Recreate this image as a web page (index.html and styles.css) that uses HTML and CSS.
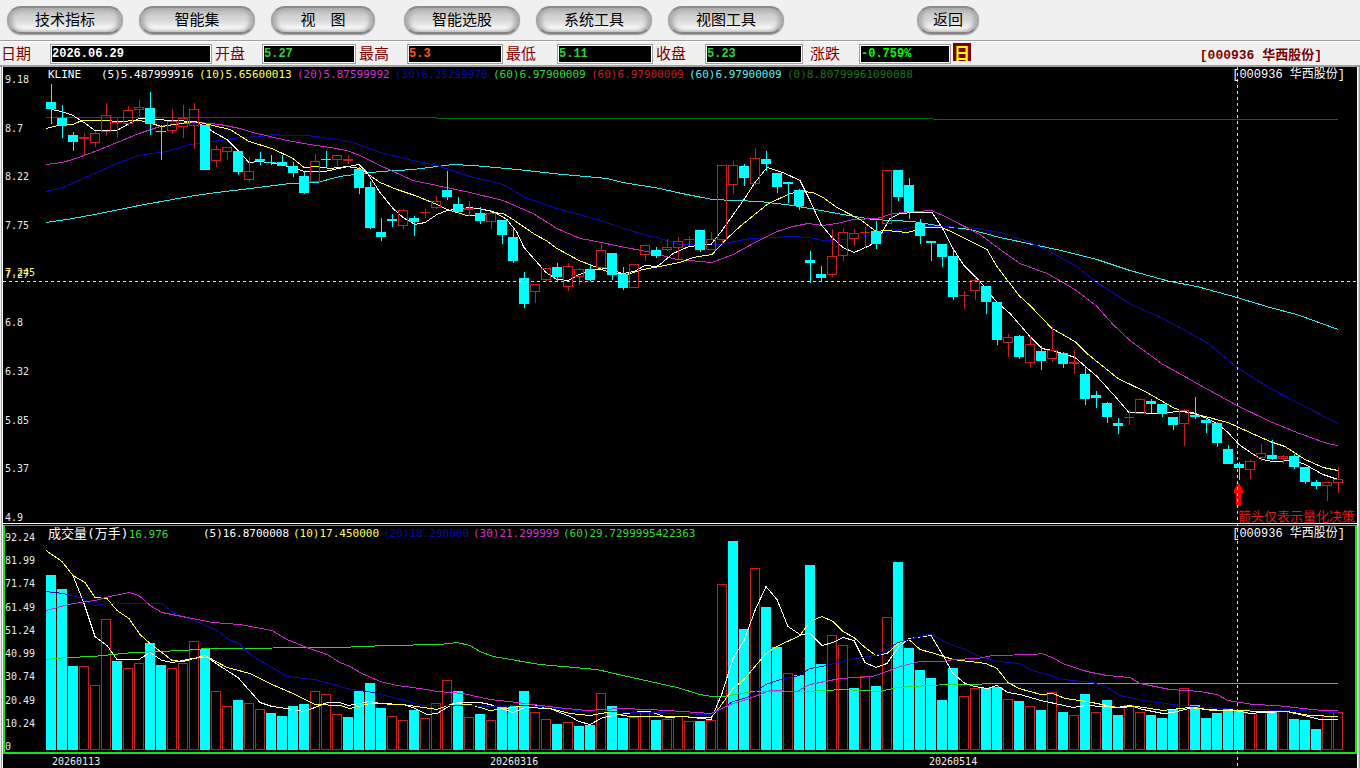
FILE: index.html
```
<!DOCTYPE html>
<html lang="zh-CN">
<head>
<meta charset="utf-8">
<title>[000936 华西股份]</title>
<link rel="stylesheet" href="styles.css">
</head>
<body>
<nav class="toolbar">
  <button class="pill" type="button">技术指标</button>
  <button class="pill" type="button">智能集</button>
  <button class="pill pill-view" type="button">视&#12288;图</button>
  <button class="pill" type="button">智能选股</button>
  <button class="pill" type="button">系统工具</button>
  <button class="pill" type="button">视图工具</button>
  <button class="pill pill-back" type="button">返回</button>
</nav>
<form class="quote">
  <label class="first" for="date">日期</label><input id="date" class="white" value="2026.06.29" readonly>
  <label for="open">开盘</label><input id="open" value="5.27" readonly>
  <label for="high">最高</label><input id="high" class="up" value="5.3" readonly>
  <label for="low">最低</label><input id="low" value="5.11" readonly>
  <label for="close">收盘</label><input id="close" value="5.23" readonly>
  <label class="wide" for="change">涨跌</label><input id="change" class="bright" value="-0.759%" readonly>
  <button class="period" type="button">日</button>
  <strong class="stock">[000936 华西股份]</strong>
</form>
<main class="chart">
  <section class="pane price">
    <svg id="price-plot" viewBox="3 67 1354 456" role="img" aria-label="KLINE"></svg>
    <div class="axis">
      <span>9.18</span><span>8.7</span><span>8.22</span><span>7.75</span><span class="under">7.27<b class="cursor-value">7.245</b></span><span>6.8</span><span>6.32</span><span>5.85</span><span>5.37</span><span>4.9</span>
    </div>
    <div class="legend">
      <span class="name">KLINE</span>
      <span>(5)5.487999916</span><span class="yellow">(10)5.65600013</span><span class="magenta">(20)5.87599992</span><span class="blue">(30)6.25299978</span><span class="green">(60)6.97900009</span><span class="red">(60)6.97900009</span><span class="cyan">(60)6.97900009</span><span class="dark">(0)8.80799961090088</span>
      <span class="code">[000936 华西股份]</span>
    </div>
  </section>
  <section class="pane volume">
    <svg id="volume-plot" viewBox="5 526 1350 226" role="img" aria-label="成交量"></svg>
    <div class="axis">
      <span>92.24</span><span>81.99</span><span>71.74</span><span>61.49</span><span>51.24</span><span>40.99</span><span>30.74</span><span>20.49</span><span>10.24</span><span>0</span>
    </div>
    <div class="legend">
      <span class="name"><span class="caption">成交量(万手)</span><span class="green">16.976</span></span>
      <span>(5)16.8700008</span><span class="yellow">(10)17.450000</span><span class="blue">(20)18.290000</span><span class="magenta">(30)21.299999</span><span class="green">(60)29.7299995422363</span>
      <span class="code">[000936 华西股份]</span>
    </div>
  </section>
  <footer class="dates"><span>20260113</span><span>20260316</span><span>20260514</span></footer>
  <div class="crosshair"></div>
</main>
<script src="chart.js"></script>
</body>
</html>
```
FILE: styles.css
```
* { box-sizing: border-box; }
body {
  margin: 0;
  background: #f0f0f0;
  font-family: "Liberation Sans", "Noto Sans CJK SC", sans-serif;
}
.toolbar {
  display: flex;
  align-items: flex-start;
  gap: 16px;
  height: 41px;
  padding: 6px 7px;
  border-bottom: 1px solid #a0a0a0;
}
.pill {
  width: 116px;
  height: 28px;
  padding: 0 0 2px;
  border: 2px solid #a4a4a4;
  border-top-color: #8c8c8c;
  border-bottom-color: #848484;
  border-radius: 14px;
  background: linear-gradient(#b4b4b4, #d2d2d2 35%, #d6d6d6 50%, #f4f4f4 80%, #fff);
  box-shadow: inset 3px 0 4px #aaa, inset -3px 0 4px #aaa, 0 1px 1px #999;
  color: #000;
  font: 15px/20px "Noto Sans CJK SC", sans-serif;
  white-space: nowrap;
}
.pill-view { width: 104px; margin-right: 13px; }
.pill-back { width: 62px; margin-left: 117px; }
.quote {
  display: grid;
  grid-template-columns: 50px 162px 50px 94px 51px 96px 54px 96px 52px 98px 56px 92px 20px 1fr;
  align-items: center;
  height: 26px;
  border-top: 1px solid #fff;
  border-bottom: 2px solid #a0a0a0;
}
.quote label {
  padding: 0 0 2px 3px;
  color: #800000;
  font: 15px/20px "Noto Sans CJK SC", sans-serif;
}
.quote .first { padding-left: 1px; }
.quote .wide { padding-left: 7px; }
.quote input {
  width: 100%;
  height: 20px;
  padding: 0;
  border: 1px solid #a0a0a0;
  outline: 1px solid #fff;
  outline-offset: -2px;
  background: #000;
  color: #32d232;
  font: bold 12px/16px "Liberation Mono", monospace;
  text-indent: 1px;
}
.quote .white { color: #fff; }
.quote .up { color: #ff5a1e; }
.quote .bright { color: #0f0; }
.period {
  width: 18px;
  height: 18px;
  margin: 0 0 3px 2px;
  padding: 0;
  border: 0;
  background: #800000;
  color: #ff0;
  font: bold 16px/17px "Noto Sans CJK SC", sans-serif;
}
.stock {
  justify-self: end;
  padding: 4px 38px 0 0;
  color: #800000;
  font: bold 13px/18px "Liberation Mono", "Noto Sans CJK SC", monospace;
}
.chart {
  position: relative;
  padding: 0 3px 1px;
  overflow: hidden;
  background: linear-gradient(90deg, #f0f0f0 1px, #a0a0a0 1px 2px, #fff 2px 50%, #fff calc(100% - 2px), #a0a0a0 calc(100% - 1px));
}
.pane { display: grid; background: #000; }
.pane > * { grid-area: 1 / 1; }
.pane svg { display: block; width: 100%; height: auto; overflow: visible; }
.price { border-bottom: 1px solid #fff; }
.volume {
  border: 2px solid #14e614;
  border-top: 1px solid #32c832;
  box-shadow: 0 -1px 0 #000;
  margin-top: 1px;
}
.axis {
  display: flex;
  flex-direction: column;
  justify-content: space-between;
  width: 40px;
  padding: 8px 0 0 2px;
  color: #e8e8e8;
  font: 10px/10px "DejaVu Sans Mono", monospace;
}
.volume .axis { padding: 7px 0 0; }
.under { position: relative; }
.cursor-value {
  position: absolute;
  left: 0;
  bottom: 2px;
  color: #ff5;
  font-weight: normal;
}
.legend {
  display: grid;
  grid-template-columns: 53px repeat(7, 98px) 1fr auto;
  align-self: start;
  padding: 0 12px 0 45px;
  color: #fff;
  font: 11px/16px "DejaVu Sans Mono", "Noto Sans CJK SC", monospace;
  white-space: nowrap;
}
.volume .legend {
  grid-template-columns: 155px repeat(4, 90px) 1fr auto;
  padding: 0 10px 0 43px;
}
.code { font: 12px/16px "Liberation Mono", "Noto Sans CJK SC", monospace; }
.caption { font-size: 13px; }
.yellow { color: #ffff50; }
.magenta { color: #d232d2; }
.blue { color: #0a0aaa; }
.green { color: #32dc32; }
.red { color: #c81e1e; }
.cyan { color: #50f0f0; }
.dark { color: #147814; }
.dates {
  display: grid;
  grid-template-columns: 438fr 439fr 428fr;
  padding: 2px 0 0 49px;
  background: #000;
  color: #f0f0f0;
  font: 10px/12px "DejaVu Sans Mono", monospace;
}
.chart::after {
  content: "";
  position: absolute;
  right: 0;
  bottom: 0;
  left: 0;
  height: 1px;
  background: #a0a0a0;
}
.crosshair {
  position: absolute;
  top: 0;
  bottom: 1px;
  left: 90.95%;
  width: 1px;
  background: repeating-linear-gradient(#d8d8d8 0 3px, transparent 3px 6px);
}
.line { fill: none; stroke-width: 1; }
.plot-note { fill: #dc1e1e; font: 13px "Noto Sans CJK SC", sans-serif; }
```
FILE: chart.js
```
const STEP = 11;
const LEFT = 46;
const CYAN = "#00ffff";
const RED = "#c81e1e";

// High, body top, body bottom, low; the last field is the direction.
const candles = `84 102 109 124 d;105 118 126 138 d;132 135 142 151 d;133 137 139 155 u;131 133 143 147 u;103 115 132 136 u;118 122 123 138 u;106 110 124 126 u;100 107 110 116 u;92 108 124 135 d;125 131 132 160 d;109 121 131 134 u;105 118 127 138 u;103 109 126 149 u;125 125 170 170 d;145 149 161 167 u;147 147 152 160 u;151 151 172 175 d;157 171 180 182 u;152 159 161 165 d;155 162 163 165 d;155 162 166 166 d;162 166 173 177 d;172 176 193 194 d;154 161 182 182 u;151 159 160 167 d;155 155 160 166 u;155 159 161 164 u;167 169 188 194 d;181 187 228 229 d;218 232 237 241 d;214 219 221 227 d;209 210 226 229 u;216 218 222 236 d;209 212 213 218 u;196 201 208 209 u;171 190 197 200 d;197 204 212 213 d;201 208 210 216 u;207 213 221 224 d;212 213 222 229 u;220 220 235 244 d;228 237 261 263 d;272 278 304 308 d;284 284 292 303 u;268 268 280 281 u;263 267 277 281 d;263 266 287 291 u;268 269 277 285 u;264 269 280 281 d;244 250 268 268 u;253 253 275 280 d;267 274 288 290 d;264 264 288 288 u;245 245 255 261 u;247 250 256 258 d;239 247 250 251 u;237 241 248 259 u;236 239 240 246 u;230 230 250 252 d;232 239 250 250 u;165 165 240 244 u;161 165 185 194 u;164 166 178 186 d;148 158 184 185 u;151 159 164 171 d;173 173 187 193 d;182 182 184 203 d;189 190 206 210 d;251 260 263 283 d;266 274 278 281 d;229 256 275 277 u;228 232 256 261 u;229 233 239 246 u;227 232 233 248 u;221 231 244 249 d;170 170 224 224 u;170 170 197 201 d;178 185 212 219 d;219 223 236 244 d;241 241 243 261 d;244 244 257 267 d;248 256 297 300 d;291 295 296 309 u;277 280 291 300 u;286 286 302 314 d;302 302 340 345 d;334 337 343 357 u;335 336 357 359 d;336 344 363 367 u;346 351 361 370 d;327 350 359 362 u;352 353 364 368 d;350 362 364 374 u;367 374 399 405 d;391 395 398 408 d;402 403 417 423 d;418 423 426 434 d;410 417 418 425 u;398 399 414 414 u;399 401 404 413 d;404 404 414 417 d;417 417 425 430 d;409 410 424 446 u;397 415 417 419 d;418 420 423 433 d;422 423 443 447 d;445 449 464 464 d;462 464 468 480 d;460 461 470 479 u;444 453 458 461 u;440 455 459 460 d;455 456 459 464 u;454 456 467 469 d;467 467 482 484 d;480 482 486 489 d;482 482 486 501 u;467 479 483 493 u`
  .split(";").map(row => {
    const [high, top, bottom, low, dir] = row.split(" ");
    return { high: +high, top: +top, bottom: +bottom, low: +low, up: dir === "u" };
  });

const volumes = [
  575,589,666,666,685,619,661,668,663,643,665,668,663,641,649,691,706,700,703,709,713,716,706,704,691,694,714,717,691,683,
  708,716,720,710,718,703,680,691,717,714,720,706,706,691,712,719,724,722,726,725,693,706,718,717,711,720,719,716,721,721,
  720,584,541,629,568,607,647,673,675,565,664,635,645,688,676,686,617,562,648,670,678,700,668,696,688,688,687,699,701,706,
  710,692,712,715,694,712,700,715,705,712,715,718,709,688,705,718,713,709,711,713,711,711,711,719,720,729,716,712
];

// One letter per day: r is a hollow bar, c a solid one.
const volumeKinds =
  "cccrrrcrrc" + "crrrcrrcrr" + "ccccrrrccc" + "crrcrrrcrc" + "rcccrrcrcc" + "rccrrcrrrc" +
  "rrccrccrcc" + "crrcrcrccc" + "cccrrccrcr" + "crcrcrccrr" + "cccrcccccr" + "rcrcccrr";

const priceLines = [
  ["#006e00", "46,117 815,118 1050,119 1338,119"],
  ["#37e6e6", "46,222 67,219 100,213 139,205 167,200 195,195 217,192 250,188 290,183 317,182 340,176 347,175 380,171 413,169 437,166 453,164 473,165 517,169 563,174 607,178 623,182 660,188 677,192 712,199 760,201 793,205 810,208 843,214 873,219 913,221 937,225 970,229 1000,237 1061,250 1097,259 1130,270 1170,281 1197,286 1237,297 1270,307 1297,314 1338,329"],
  ["#0a0ab4", "46,191 63,187 83,178 117,163 139,155 167,151 190,144 213,141 240,137 263,136 273,134 287,135 307,135 330,138 353,142 380,152 413,160 437,165 470,176 503,184 525,197 557,208 597,219 637,232 660,238 680,244 720,244 750,238 793,236 810,237 823,240 837,240 860,237 887,232 910,227 937,226 970,227 1000,232 1025,240 1048,250 1075,265 1097,282 1128,302 1140,308 1163,318 1207,342 1237,367 1253,377 1270,388 1297,402 1338,423"],
  ["#c828c8", "46,164 62,162 73,159 95,151 117,142 139,133 160,126 180,123 200,122 220,124 240,128 253,132 287,140 310,144 330,147 347,150 360,155 380,165 413,180 437,185 470,192 503,200 533,213 557,228 580,238 597,241 620,246 647,251 677,259 712,262 733,254 755,242 777,231 793,226 808,223 823,225 837,223 853,219 877,218 893,213 917,211 932,210 947,217 980,234 1000,249 1020,263 1047,273 1075,289 1097,306 1113,324 1130,340 1163,364 1183,375 1197,383 1237,405 1270,421 1297,432 1327,443 1338,445"],
  ["#ffff46", "46,128 62,124 73,124 82,120 107,120 117,121 140,120 162,126 187,122 195,121 213,125 230,129 249,141 272,148 293,158 304,167 317,166 330,168 347,166 360,168 380,182 397,189 415,195 437,204 447,209 467,215 480,215 493,212 503,213 513,219 535,234 546,240 557,248 579,260 597,267 607,271 627,274 643,269 660,266 680,262 693,257 712,254 727,238 740,226 767,204 790,193 803,191 813,192 823,197 837,207 860,219 876,231 887,230 907,232 927,227 942,227 953,232 987,249 997,266 1019,295 1030,305 1052,328 1075,341 1087,353 1118,378 1147,392 1173,407 1183,411 1197,414 1228,422 1250,432 1270,441 1285,446 1305,459 1323,467 1338,470"],
  ["#ffffff", "51,109 62,111 73,115 84,122 95,130 117,130 129,123 139,118 155,119 173,120 195,121 205,126 216,133 227,139 238,150 249,162 260,161 275,163 293,167 304,171 325,171 343,167 359,164 367,172 380,192 393,208 403,217 415,224 425,222 437,214 447,210 470,207 483,209 493,211 507,219 517,232 524,247 546,272 557,279 568,280 579,274 597,269 607,268 623,273 634,271 645,265 656,266 660,264 673,253 689,246 711,244 722,230 744,199 755,182 767,167 783,172 800,180 810,200 821,224 832,237 843,247 854,252 870,245 882,232 890,218 900,213 915,212 932,212 942,227 953,248 964,265 980,281 997,302 1003,307 1010,313 1030,336 1042,348 1052,350 1063,353 1075,357 1097,376 1117,398 1129,412 1140,412 1152,413 1167,412 1180,411 1193,412 1207,418 1217,423 1228,432 1239,444 1252,453 1262,459 1273,461 1294,460 1305,464 1323,474 1338,479"]
];

const volumeLines = [
  ["#28dc28", "46,659 67,657 93,656 133,652 183,650 207,648 340,647 363,646 387,645 440,644 457,642 470,645 480,651 493,656 540,664 597,669 623,675 677,687 700,694 712,696 723,696 753,691 807,691 843,689 880,691 897,687 947,684 1019,683 1338,683"],
  ["#ffffff", "46,550 62,561 73,575 84,603 95,636 107,645 117,659 139,659 150,652 162,660 173,662 187,659 200,657 207,657 227,670 238,677 260,702 272,706 287,708 304,711 315,707 327,702 340,702 348,705 370,701 380,703 403,704 413,707 427,714 437,713 447,707 457,702 480,702 490,704 513,712 525,707 550,708 570,716 579,721 590,724 603,717 620,714 640,711 650,711 667,717 683,716 711,719 722,693 733,658 744,640 755,610 766,586 777,599 788,626 800,634 810,633 822,645 833,642 843,637 854,640 865,662 876,667 887,663 898,647 909,638 931,635 943,655 953,673 965,683 975,686 987,688 997,685 1008,692 1020,694 1041,700 1073,707 1087,705 1117,707 1130,705 1143,709 1163,713 1173,712 1193,707 1207,709 1227,708 1250,713 1263,712 1287,711 1300,714 1320,719 1338,719"],
  ["#ffff46", "46,550 62,561 73,575 85,582 95,597 107,598 117,610 129,618 140,634 150,643 162,652 172,660 183,661 205,655 227,667 250,673 272,684 293,693 315,704 340,705 350,708 370,703 403,704 437,709 453,703 470,704 490,710 513,707 530,704 550,708 570,713 590,715 607,712 630,716 667,716 711,717 718,709 733,688 744,679 766,653 777,646 800,635 810,621 822,616 833,621 843,631 854,637 865,647 876,655 887,653 898,643 909,639 920,649 931,652 947,657 953,659 986,663 997,668 1008,682 1019,688 1041,694 1053,693 1065,698 1087,701 1117,707 1137,706 1163,710 1190,707 1213,710 1287,711 1310,715 1338,716"],
  ["#0a0ab4", "46,591 63,593 80,597 95,605 107,603 162,603 173,612 187,617 217,630 227,638 240,644 250,654 287,676 315,679 347,688 373,692 397,698 423,705 463,705 490,706 530,705 557,708 590,711 650,712 711,714 733,701 747,697 766,684 780,679 799,675 810,668 822,666 850,659 880,654 898,642 920,636 931,634 953,645 963,648 977,655 997,661 1019,663 1032,670 1047,674 1063,679 1093,682 1107,687 1120,695 1143,700 1173,704 1203,707 1243,709 1297,710 1338,712"],
  ["#c828c8", "46,610 73,603 95,600 110,596 129,592 139,595 150,605 162,612 187,617 213,622 240,624 272,630 287,639 307,647 327,654 340,662 350,666 360,672 380,681 397,685 420,688 437,691 463,693 490,699 517,702 557,707 587,710 620,708 650,709 683,711 711,713 733,703 747,699 770,690 797,691 810,684 840,678 873,676 900,666 920,661 943,661 953,659 977,658 993,655 1035,654 1042,653 1052,657 1065,664 1087,671 1107,675 1130,677 1140,683 1170,689 1200,691 1217,694 1228,700 1253,704 1277,705 1303,708 1323,710 1338,710"]
];

function bar(x, top, bottom, up) {
  const height = Math.max(1, bottom - top);
  if (!up || height < 3) {
    return `<rect x="${x}" y="${top}" width="10" height="${height}" fill="${up ? RED : CYAN}"/>`;
  }
  return `<rect x="${x + 0.5}" y="${top + 0.5}" width="9" height="${height - 1}" fill="none" stroke="${RED}"/>`;
}

function wick(x, from, to, up) {
  return to > from ? `<rect x="${x + 5}" y="${from}" width="1" height="${to - from}" fill="${up ? RED : CYAN}"/>` : "";
}

const drawLines = lines => lines.map(([color, points]) =>
  `<polyline class="line" shape-rendering="crispEdges" transform="translate(0 .5)" stroke="${color}" points="${points}"/>`).join("");

document.getElementById("price-plot").innerHTML =
  drawLines(priceLines) +
  candles.map((c, i) => {
    const x = LEFT + i * STEP;
    return wick(x, c.high, c.top, c.up) + wick(x, c.bottom, c.low, c.up) + bar(x, c.top, c.bottom, c.up);
  }).join("") +
  `<line x1="3" y1="281.5" x2="1357" y2="281.5" stroke="#d8d8d8" stroke-dasharray="3 3"/>
   <path d="M1238 483h1l4 7v3h-2v13h-5v-13h-2v-3z" fill="#ff0000"/>
   <text class="plot-note" x="1238" y="521">箭头仅表示量化决策</text>`;

document.getElementById("volume-plot").innerHTML =
  volumes.map((top, i) => bar(LEFT + i * STEP, top, 750, volumeKinds[i] === "r")).join("") + drawLines(volumeLines);
```
